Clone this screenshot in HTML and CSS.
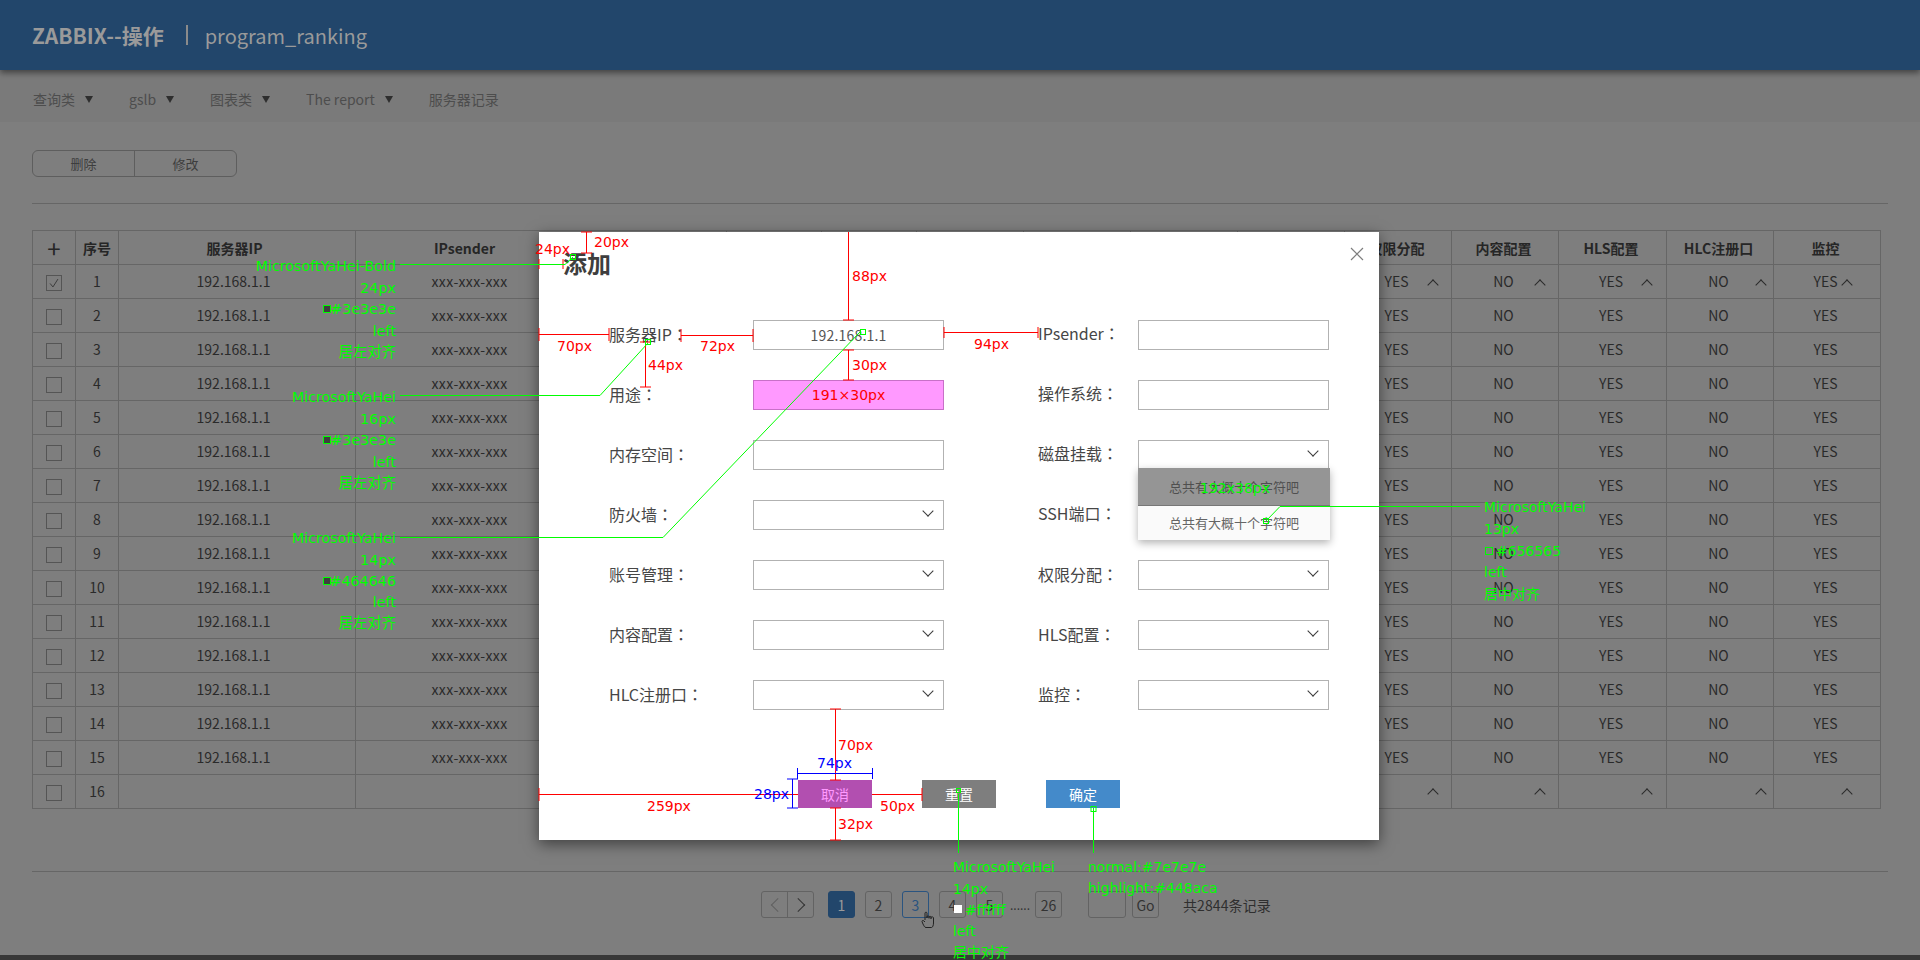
FILE: index.html
```html
<!DOCTYPE html>
<html lang="zh-CN">
<head>
<meta charset="utf-8">
<title>ZABBIX--操作</title>
<link rel="stylesheet" href="styles.css">
</head>
<body>
<div class="page">
  <header class="topbar">
    <strong class="brand">ZABBIX--操作</strong>
    <span class="divider"></span>
    <span class="app-name">program_ranking</span>
  </header>
  <nav class="nav">
    <a class="nav-item">查询类<i class="tri"></i></a>
    <a class="nav-item">gslb<i class="tri"></i></a>
    <a class="nav-item">图表类<i class="tri"></i></a>
    <a class="nav-item">The report<i class="tri"></i></a>
    <a class="nav-item">服务器记录</a>
  </nav>
  <main class="main">
    <div class="btn-group"><button class="group-btn">删除</button><button class="group-btn">修改</button></div>
    <hr class="rule rule-top">
    <table class="grid">
      <colgroup>
        <col class="w43"><col class="w43"><col class="w237"><col class="w371"><col class="w95"><col class="w95"><col class="w107"><col class="w107"><col class="w107"><col class="w107"><col class="w107"><col class="w107"><col class="w108"><col class="w107"><col class="w107">
      </colgroup>
      <thead>
        <tr><th class="plus">+</th><th>序号</th><th class="ip">服务器IP</th><th class="head-sender">IPsender</th><th>用途</th><th>操作系统</th><th>内存空间</th><th>磁盘挂载</th><th>防火墙</th><th>SSH端口</th><th>权限分配</th><th>内容配置</th><th>HLS配置</th><th>HLC注册口</th><th>监控</th></tr>
      </thead>
      <tbody>
        <tr><td><i class="cb checked"><svg viewBox="0 0 16 16" class="tick"><path d="M3.5 8.5 L6.8 12.5 L12.5 3.5"/></svg></i></td><td>1</td><td class="ip">192.168.1.1</td><td class="sender">xxx-xxx-xxx</td><td></td><td></td><td></td><td></td><td></td><td></td><td class="yn">YES<i class="up up1"></i></td><td class="yn">NO<i class="up up2"></i></td><td class="yn">YES<i class="up up3"></i></td><td class="yn">NO<i class="up up4"></i></td><td class="yn">YES<i class="up up5"></i></td></tr>
        <tr><td><i class="cb"></i></td><td>2</td><td class="ip">192.168.1.1</td><td class="sender">xxx-xxx-xxx</td><td></td><td></td><td></td><td></td><td></td><td></td><td>YES</td><td>NO</td><td>YES</td><td>NO</td><td>YES</td></tr>
        <tr><td><i class="cb"></i></td><td>3</td><td class="ip">192.168.1.1</td><td class="sender">xxx-xxx-xxx</td><td></td><td></td><td></td><td></td><td></td><td></td><td>YES</td><td>NO</td><td>YES</td><td>NO</td><td>YES</td></tr>
        <tr><td><i class="cb"></i></td><td>4</td><td class="ip">192.168.1.1</td><td class="sender">xxx-xxx-xxx</td><td></td><td></td><td></td><td></td><td></td><td></td><td>YES</td><td>NO</td><td>YES</td><td>NO</td><td>YES</td></tr>
        <tr><td><i class="cb"></i></td><td>5</td><td class="ip">192.168.1.1</td><td class="sender">xxx-xxx-xxx</td><td></td><td></td><td></td><td></td><td></td><td></td><td>YES</td><td>NO</td><td>YES</td><td>NO</td><td>YES</td></tr>
        <tr><td><i class="cb"></i></td><td>6</td><td class="ip">192.168.1.1</td><td class="sender">xxx-xxx-xxx</td><td></td><td></td><td></td><td></td><td></td><td></td><td>YES</td><td>NO</td><td>YES</td><td>NO</td><td>YES</td></tr>
        <tr><td><i class="cb"></i></td><td>7</td><td class="ip">192.168.1.1</td><td class="sender">xxx-xxx-xxx</td><td></td><td></td><td></td><td></td><td></td><td></td><td>YES</td><td>NO</td><td>YES</td><td>NO</td><td>YES</td></tr>
        <tr><td><i class="cb"></i></td><td>8</td><td class="ip">192.168.1.1</td><td class="sender">xxx-xxx-xxx</td><td></td><td></td><td></td><td></td><td></td><td></td><td>YES</td><td>NO</td><td>YES</td><td>NO</td><td>YES</td></tr>
        <tr><td><i class="cb"></i></td><td>9</td><td class="ip">192.168.1.1</td><td class="sender">xxx-xxx-xxx</td><td></td><td></td><td></td><td></td><td></td><td></td><td>YES</td><td>NO</td><td>YES</td><td>NO</td><td>YES</td></tr>
        <tr><td><i class="cb"></i></td><td>10</td><td class="ip">192.168.1.1</td><td class="sender">xxx-xxx-xxx</td><td></td><td></td><td></td><td></td><td></td><td></td><td>YES</td><td>NO</td><td>YES</td><td>NO</td><td>YES</td></tr>
        <tr><td><i class="cb"></i></td><td>11</td><td class="ip">192.168.1.1</td><td class="sender">xxx-xxx-xxx</td><td></td><td></td><td></td><td></td><td></td><td></td><td>YES</td><td>NO</td><td>YES</td><td>NO</td><td>YES</td></tr>
        <tr><td><i class="cb"></i></td><td>12</td><td class="ip">192.168.1.1</td><td class="sender">xxx-xxx-xxx</td><td></td><td></td><td></td><td></td><td></td><td></td><td>YES</td><td>NO</td><td>YES</td><td>NO</td><td>YES</td></tr>
        <tr><td><i class="cb"></i></td><td>13</td><td class="ip">192.168.1.1</td><td class="sender">xxx-xxx-xxx</td><td></td><td></td><td></td><td></td><td></td><td></td><td>YES</td><td>NO</td><td>YES</td><td>NO</td><td>YES</td></tr>
        <tr><td><i class="cb"></i></td><td>14</td><td class="ip">192.168.1.1</td><td class="sender">xxx-xxx-xxx</td><td></td><td></td><td></td><td></td><td></td><td></td><td>YES</td><td>NO</td><td>YES</td><td>NO</td><td>YES</td></tr>
        <tr><td><i class="cb"></i></td><td>15</td><td class="ip">192.168.1.1</td><td class="sender">xxx-xxx-xxx</td><td></td><td></td><td></td><td></td><td></td><td></td><td>YES</td><td>NO</td><td>YES</td><td>NO</td><td>YES</td></tr>
        <tr><td><i class="cb"></i></td><td>16</td><td class="ip"></td><td class="sender"></td><td></td><td></td><td></td><td></td><td></td><td></td><td class="yn"><i class="up up1 last"></i></td><td class="yn"><i class="up up2 last"></i></td><td class="yn"><i class="up up3 last"></i></td><td class="yn"><i class="up up4 last"></i></td><td class="yn"><i class="up up5 last"></i></td></tr>
      </tbody>
    </table>
    <hr class="rule rule-bottom">
    <div class="pager">
      <span class="pg pg-prev"><i class="pg-arrow pg-left"></i></span><span class="pg pg-next"><i class="pg-arrow pg-right"></i></span>
      <span class="pg pg-current">1</span>
      <span class="pg">2</span>
      <span class="pg pg-hover">3</span>
      <span class="pg">4</span>
      <span class="pg">5</span>
      <span class="pg-dots">......</span>
      <span class="pg">26</span>
      <span class="pg pg-input"></span>
      <span class="pg pg-go">Go</span>
      <span class="pg-total">共2844条记录</span>
    </div>
  </main>
  <div class="bottom-bar"></div>

  <section class="modal">
    <h2 class="modal-title">添加</h2>
    <svg class="modal-close" viewBox="0 0 14 14"><path d="M1 1 L13 13 M13 1 L1 13"/></svg>
    <form class="form">
      <label class="lbl">服务器IP<span class="colon" lang="zh-TW">：</span></label><div class="field field-value">192.168.1.1</div><span></span>
      <label class="lbl lbl-r">IPsender<span class="colon" lang="zh-TW">：</span></label><div class="field"></div>
      <label class="lbl">用途<span class="colon" lang="zh-TW">：</span></label><div class="field field-marked">191×30px</div><span></span>
      <label class="lbl lbl-r">操作系统<span class="colon" lang="zh-TW">：</span></label><div class="field"></div>
      <label class="lbl">内存空间<span class="colon" lang="zh-TW">：</span></label><div class="field"></div><span></span>
      <label class="lbl lbl-r">磁盘挂载<span class="colon" lang="zh-TW">：</span></label>
      <div class="field select"><i class="down"></i>
        <ul class="menu"><li class="menu-on">总共有大概十个字符吧</li><li>总共有大概十个字符吧</li></ul>
      </div>
      <label class="lbl">防火墙<span class="colon" lang="zh-TW">：</span></label><div class="field select"><i class="down"></i></div><span></span>
      <label class="lbl lbl-r">SSH端口<span class="colon" lang="zh-TW">：</span></label><div class="field select"></div>
      <label class="lbl">账号管理<span class="colon" lang="zh-TW">：</span></label><div class="field select"><i class="down"></i></div><span></span>
      <label class="lbl">权限分配<span class="colon" lang="zh-TW">：</span></label><div class="field select"><i class="down"></i></div>
      <label class="lbl">内容配置<span class="colon" lang="zh-TW">：</span></label><div class="field select"><i class="down"></i></div><span></span>
      <label class="lbl">HLS配置<span class="colon" lang="zh-TW">：</span></label><div class="field select"><i class="down"></i></div>
      <label class="lbl">HLC注册口<span class="colon" lang="zh-TW">：</span></label><div class="field select"><i class="down"></i></div><span></span>
      <label class="lbl">监控<span class="colon" lang="zh-TW">：</span></label><div class="field select"><i class="down"></i></div>
    </form>
    <div class="actions">
      <button class="act act-cancel">取消</button>
      <button class="act act-reset">重置</button>
      <button class="act act-ok">确定</button>
    </div>
  </section>

  <svg class="cursor" viewBox="0 0 16 18"><path d="M4 9 V2.2 C4 0.8 6 0.8 6 2.2 V7 M6 7 V5.6 C6 4.6 8 4.6 8 5.6 V7.5 M8 7 V6 C8 5 10 5 10 6 V8 M10 7.5 V6.6 C10 5.6 12.5 5.6 12.5 6.8 V12 C12.5 14.5 11.5 16.5 10.5 16.5 H5 C3.5 16.5 2.8 14.5 2 13 L1 10.6 C0.8 9.6 2 9 3 10 L4 11"/></svg>

  <svg class="spec" viewBox="0 0 1920 960">
    <g class="red">
      <path d="M586.5 232V253 M581 232H592 M581 253H592"/>
      <path d="M539 259V269 M563 259V269"/>
      <path d="M848.5 232V320 M843 320H854"/>
      <path d="M539 334.5H609 M539 328V341 M609 328V341"/>
      <path d="M681 335.5H753 M681 329V342 M753 329V342"/>
      <path d="M645.5 342V387 M640 342H651 M640 387H651"/>
      <path d="M848.5 350V380 M843 350H854 M843 380H854"/>
      <path d="M944 332.5H1038 M944 327V338 M1038 327V338"/>
      <path d="M835.5 709V780 M830 709H841 M830 780H841"/>
      <path d="M539 794.5H798 M539 788V801"/>
      <path d="M872 794.5H922 M922 788V801"/>
      <path d="M835.5 808V840 M830 808H841 M830 840H841"/>
      <text x="535" y="254">24px</text>
      <text x="594" y="247">20px</text>
      <text x="852" y="281">88px</text>
      <text x="557" y="351">70px</text>
      <text x="700" y="351">72px</text>
      <text x="648" y="370">44px</text>
      <text x="852" y="370">30px</text>
      <text x="974" y="349">94px</text>
      <text x="838" y="750">70px</text>
      <text x="647" y="811">259px</text>
      <text x="880" y="811">50px</text>
      <text x="838" y="829">32px</text>
    </g>
    <g class="blue">
      <path d="M797.5 773.5H872.5 M797.5 768V779 M872.5 768V779"/>
      <path d="M792.5 779V808 M787 779H798 M787 808H798"/>
      <text x="817" y="768">74px</text>
      <text x="754" y="799">28px</text>
    </g>
    <g class="green-lines">
      <path d="M400 264.5H565 L573 257"/>
      <rect x="570.5" y="254.5" width="5" height="5"/>
      <path d="M400 395.5H600 L648 343"/>
      <rect x="645.5" y="339.5" width="5" height="5"/>
      <path d="M400 537.5H663 L860 332"/>
      <rect x="860.5" y="329.5" width="5" height="5"/>
      <path d="M1480 506.5H1280 L1266 521"/>
      <rect x="1263.5" y="518.5" width="5" height="5"/>
      <path d="M958.5 794V853"/>
      <rect x="956.5" y="788.5" width="4" height="4"/>
      <path d="M1093.5 808V853"/>
      <rect x="1091" y="806.5" width="5" height="5"/>
    </g>
    <g class="green">
      <g class="end">
        <text x="396" y="271">MicrosoftYaHei-Bold</text>
        <text x="396" y="293">24px</text>
        <text x="396" y="314">#3e3e3e</text>
        <text x="396" y="336">left</text>
        <text x="396" y="357">居左对齐</text>
        <text x="396" y="402">MicrosoftYaHei</text>
        <text x="396" y="424">16px</text>
        <text x="396" y="445">#3e3e3e</text>
        <text x="396" y="467">left</text>
        <text x="396" y="488">居左对齐</text>
        <text x="396" y="543">MicrosoftYaHei</text>
        <text x="396" y="565">14px</text>
        <text x="396" y="586">#464646</text>
        <text x="396" y="607">left</text>
        <text x="396" y="628">居左对齐</text>
      </g>
      <text x="1484" y="512">MicrosoftYaHei</text>
      <text x="1484" y="534">13px</text>
      <text x="1496" y="556">#656565</text>
      <text x="1484" y="577">left</text>
      <text x="1484" y="599">居中对齐</text>
      <text x="1200" y="493">192x38px</text>
      <text x="953" y="872">MicrosoftYaHei</text>
      <text x="953" y="894">14px</text>
      <text x="965" y="915">#ffffff</text>
      <text x="953" y="936">left</text>
      <text x="953" y="957">居中对齐</text>
      <text x="1088" y="872">normal:#7e7e7e</text>
      <text x="1088" y="893">highlight:#448aca</text>
    </g>
    <rect class="sw sw-dark" x="323.5" y="305.5" width="7" height="7"/>
    <rect class="sw sw-dark" x="323.5" y="436.5" width="7" height="7"/>
    <rect class="sw sw-dark" x="323.5" y="577.5" width="7" height="7"/>
    <rect class="sw sw-mid" x="1485.5" y="547.5" width="7" height="7"/>
    <rect class="sw sw-white" x="954.5" y="905.5" width="7" height="7"/>
  </svg>
</div>
</body>
</html>
```
FILE: styles.css
```css
* { box-sizing: border-box; }
html, body { margin: 0; padding: 0; }
body {
  width: 1920px; height: 960px; overflow: hidden;
  background: #7e7e7e; color: #2a2a2a;
  font-family: "Noto Sans CJK SC", "Open Sans", sans-serif;
  font-size: 14px;
}
.page { position: relative; width: 1920px; height: 960px; display: flex; flex-direction: column; }

.topbar {
  height: 70px; flex: none; display: flex; align-items: center; padding-left: 32px;
  background: #22466b; color: #9a9a9a; font-size: 20px; box-shadow: 0 3px 6px rgba(0,0,0,.45);
  position: relative;
}
.brand { font-weight: 700; font-size: 21px; }
.divider { width: 2px; height: 20px; background: #8b8b8b; margin: 0 17px 0 22px; }
.app-name { font-weight: 400; }

.nav { height: 52px; flex: none; display: flex; align-items: center; padding: 6px 0 0 33px; gap: 36px; background: #7a7a7a; color: #4d4d4d; }
.nav-item { display: flex; align-items: center; line-height: 20px; }
.tri { width: 0; height: 0; margin-left: 10px; border-left: 4px solid transparent; border-right: 4px solid transparent; border-top: 7px solid #2e2e2e; }

.main { flex: 1; padding: 28px 32px 0; display: flex; flex-direction: column; align-items: flex-start; }
.btn-group { display: flex; width: 205px; height: 27px; border: 1px solid #5e5e5e; border-radius: 6px; overflow: hidden; }
.group-btn { flex: 1; padding: 0; border: 0; background: transparent; color: #3d3d3d; font: 13px/25px "Noto Sans CJK SC", sans-serif; }
.group-btn + .group-btn { border-left: 1px solid #5e5e5e; }
.rule { width: 1856px; height: 1px; margin: 0; border: 0; background: #666; }
.rule-top { margin-top: 26px; }
.rule-bottom { margin-top: 62px; }

.grid { width: 1848px; margin-top: 26px; table-layout: fixed; border-collapse: collapse; color: #2a2a2a; }
.w43 { width: 43px; } .w95 { width: 95px; } .w107 { width: 107px; } .w108 { width: 108px; } .w237 { width: 237px; } .w371 { width: 371px; }
.grid th, .grid td { height: 34px; padding: 0 0 2px; border: 1px solid #666; text-align: center; line-height: 20px; font-size: 14px; }
.grid th { font-weight: 700; color: #262626; padding-bottom: 0; }
.grid td { position: relative; }
.grid th:nth-child(n+11), .grid td:nth-child(n+11) { padding-right: 3px; }
.grid th.ip { padding-right: 5px; }
.grid td.ip { padding-right: 7px; }
.grid .plus { font-size: 24px; font-weight: 400; line-height: 24px; }
.grid .head-sender { padding-right: 153px; }
.grid .sender { padding-right: 143px; letter-spacing: .4px; }
.cb { display: inline-block; width: 16px; height: 16px; border: 1px solid #555; vertical-align: middle; position: relative; }
.tick { display: block; width: 14px; height: 14px; fill: none; stroke: #333; stroke-width: 1; }
.up, .down { position: absolute; width: 8px; height: 8px; border-left: 1.5px solid #2a2a2a; border-top: 1.5px solid #2a2a2a; transform: rotate(45deg); }
.up { top: 16px; }
.up.last { top: 15px; }
.up1, .up2 { right: 14px; }
.up3 { right: 15px; }
.up4 { right: 8px; }
.up5 { right: 29px; }
.yn { position: relative; }

.pager { display: flex; align-items: center; height: 27px; margin-top: 19px; margin-left: 729px; gap: 10px; }
.pg { display: flex; align-items: center; justify-content: center; width: 27px; height: 27px; border: 1px solid #636363; border-radius: 3px; color: #333; font-size: 14px; }
.pg-prev { border-radius: 3px 0 0 3px; margin-right: -10px; }
.pg-next { border-radius: 0 3px 3px 0; margin-left: -1px; margin-right: 4px; }
.pg-current { background: #22466b; border-color: #22466b; color: #9a9a9a; }
.pg-hover { border-color: #2a5480; color: #2a5480; }
.pg-dots { width: 15px; margin: 0 0 0 -3px; color: #333; line-height: 20px; font-size: 12px; text-align: center; }
.pg-input { width: 38px; margin-left: 16px; margin-right: -4px; }
.pg-total { margin-left: 14px; color: #2f2f2f; font-size: 14px; letter-spacing: .1px; }
.pg-arrow { width: 10px; height: 10px; border-left: 1px solid #333; border-top: 1px solid #333; }
.pg-left { transform: rotate(-45deg) translate(2px, 2px); border-color: #606060; }
.pg-right { transform: rotate(135deg) translate(2px, 2px); }

.bottom-bar { height: 5px; flex: none; background: #383838; }

.modal { position: absolute; left: 539px; top: 232px; width: 840px; height: 608px; background: #fff; box-shadow: 0 4px 14px rgba(0,0,0,.5); color: #464646; }
.modal-title { margin: 0; padding: 15px 0 0 24px; height: 88px; font-size: 24px; line-height: 32px; font-weight: 700; color: #3e3e3e; }
.modal-close { position: absolute; right: 15px; top: 15px; width: 14px; height: 14px; fill: none; stroke: #7e7e7e; stroke-width: 1.2; }
.form { display: grid; grid-template-columns: 144px 191px 94px 100px 191px; grid-auto-rows: 30px; row-gap: 30px; padding-left: 70px; }
.lbl { font-size: 16px; line-height: 28px; color: #464646; white-space: nowrap; }
.lbl-r { line-height: 26px; }
.colon { font-family: "Noto Sans CJK TC", sans-serif; }
.field { position: relative; border: 1px solid #b2b2b2; background: #fff; height: 30px; font-size: 14px; line-height: 28px; text-align: center; color: #464646; }
.field-value { letter-spacing: .2px; color: #555; }
.field-marked { background: #ff99ff; border-color: #c870c8; color: #f00; font-family: "DejaVu Sans", sans-serif; }
.down { right: 11px; top: 6px; transform: rotate(225deg); border-color: #3a3a3a; }
.menu { position: absolute; z-index: 2; left: -1px; top: 27px; width: 192px; margin: 0; padding: 0; list-style: none; background: #fafafa; box-shadow: 0 3px 8px rgba(0,0,0,.3); font-size: 13px; color: #656565; }
.menu li { height: 34px; line-height: 34px; text-align: center; }
.menu .menu-on { height: 38px; line-height: 38px; background: #959595; border-bottom: 1px solid #777; color: #4f4f4f; }
.actions { display: flex; gap: 50px; margin-top: 70px; padding-left: 259px; }
.act { width: 74px; height: 28px; padding: 0; border: 0; color: #fff; font: 14px/28px "Noto Sans CJK SC", sans-serif; }
.act-cancel { background: #b24fb0; color: #ff99ff; }
.act-reset { background: #7e7e7e; }
.act-ok { background: #448aca; }

.cursor { position: absolute; left: 921px; top: 911px; width: 16px; height: 18px; fill: none; stroke: #222; stroke-width: 1; }

.spec { position: absolute; z-index: 5; left: 0; top: 0; width: 1920px; height: 960px; pointer-events: none; font-family: "DejaVu Sans", "Noto Sans CJK SC", sans-serif; font-size: 14px; }
.red path { fill: none; stroke: #f00; stroke-width: 1; }
.red text { fill: #f00; }
.blue path { fill: none; stroke: #00f; stroke-width: 1; }
.blue text { fill: #00f; }
.green-lines path { fill: none; stroke: #0f0; stroke-width: 1; }
.green-lines rect { fill: none; stroke: #0f0; stroke-width: 1; }
.green text { fill: #0f0; }
.end text { text-anchor: end; font-size: 14.3px; }
.sw { stroke: #0f0; stroke-width: 1; }
.sw-dark { fill: #3e3e3e; }
.sw-mid { fill: none; }
.sw-white { fill: #fff; stroke: #fff; }
```
